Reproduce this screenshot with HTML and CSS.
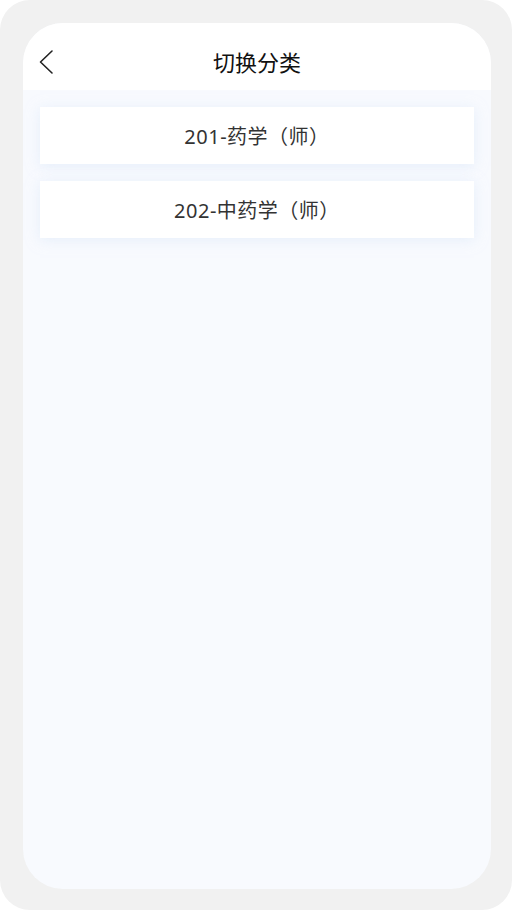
FILE: index.html
```html
<!DOCTYPE html>
<html lang="zh-CN">
<head>
    <meta charset="UTF-8">
    <meta name="viewport" content="width=device-width, initial-scale=1.0">
    <title>切换分类</title>
    <link rel="stylesheet" href="styles.css">
</head>
<body>
    <div class="device">
        <div class="screen">
            <div class="header">
                <div class="back">
                    <svg width="20" height="28" viewBox="0 0 20 28">
                        <path d="M14 3 L2.5 14 L14 25" fill="none" stroke="#222" stroke-width="1.6" stroke-linecap="round" stroke-linejoin="round"/>
                    </svg>
                </div>
                <h1>切换分类</h1>
                <div></div>
            </div>
            <div class="list">
                <div class="item">201-药学（师）</div>
                <div class="item">202-中药学（师）</div>
            </div>
        </div>
    </div>
</body>
</html>
```

FILE: styles.css
```css
body {
    margin: 0;
    background-color: #ffffff;
    font-family: "Noto Sans", "Noto Sans CJK SC", sans-serif;
}
.device {
    height: 910px;
    box-sizing: border-box;
    padding: 23px 21px 21px 23px;
    background-color: #f1f1f1;
    border-radius: 30px;
}
.screen {
    height: 866px;
    background-color: #f8fafe;
    border-radius: 40px;
    overflow: hidden;
}
.header {
    height: 67px;
    box-sizing: border-box;
    padding-top: 8px;
    background-color: #ffffff;
    display: grid;
    grid-template-columns: 1fr auto 1fr;
    align-items: center;
}
.back {
    padding-left: 15px;
    padding-top: 3px;
    display: flex;
}
h1 {
    margin: 0;
    font-size: 22px;
    font-weight: 400;
    color: #111111;
}
.list {
    padding: 17px;
    display: flex;
    flex-direction: column;
    gap: 17px;
}
.item {
    height: 57px;
    background-color: #ffffff;
    box-shadow: 0 2px 12px rgba(215, 230, 248, 0.55);
    display: flex;
    align-items: center;
    justify-content: center;
    font-size: 20px;
    letter-spacing: 0.5px;
    color: #333333;
}
```
